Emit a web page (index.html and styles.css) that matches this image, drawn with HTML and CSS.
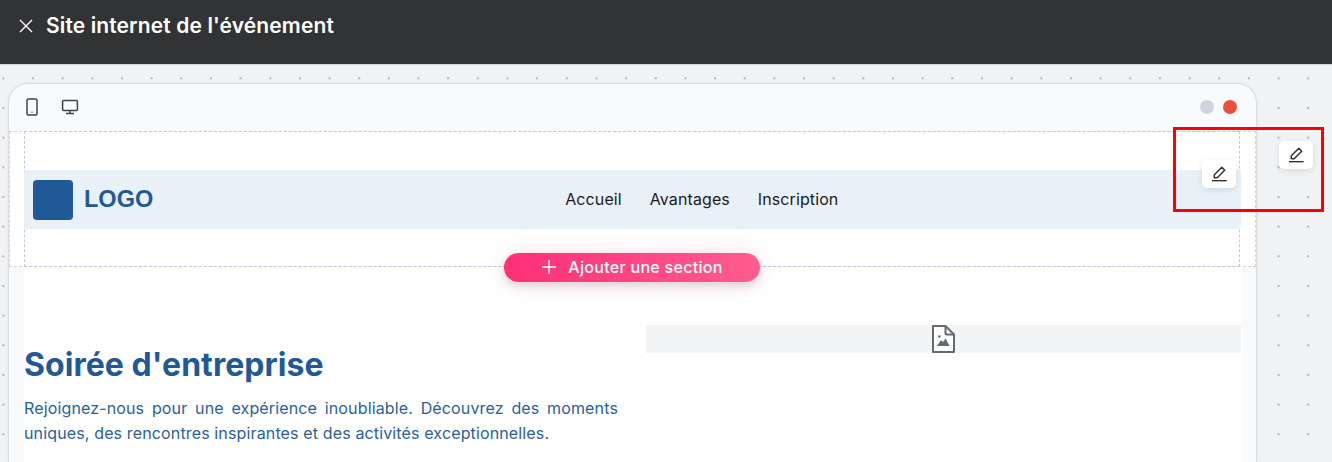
FILE: index.html
```html
<!DOCTYPE html>
<html lang="fr">
<head>
<meta charset="utf-8">
<title>Site internet de l'événement</title>
<link rel="stylesheet" href="styles.css">
</head>
<body>
<header class="topbar">
  <svg class="close" width="16" height="16" viewBox="0 0 16 16"><path d="M2 2l12 12M14 2L2 14" stroke="#fff" stroke-width="1.4" fill="none"/></svg>
  <h1 class="title">Site internet de l'événement</h1>
</header>
<main class="canvas">
  <div class="window">
    <div class="winbar">
      <svg class="dev" width="20" height="20" viewBox="0 0 20 20"><rect x="5" y="2" width="10" height="16" rx="1.5" fill="none" stroke="#3f4347" stroke-width="1.5"/><rect x="9.4" y="14.6" width="1.2" height="1.2" fill="#3f4347"/></svg>
      <svg class="dev" width="20" height="20" viewBox="0 0 20 20"><rect x="2.6" y="3.6" width="14.8" height="9.800" rx="1" fill="none" stroke="#3f4347" stroke-width="1.5"/><path d="M10 13.500v2.500M6 16.500h8" stroke="#3f4347" stroke-width="1.5" fill="none"/></svg>
      <span class="spacer"></span>
      <span class="dot grey"></span>
      <span class="dot red"></span>
    </div>
    <div class="page">
      <section class="selected">
        <div class="inner">
          <nav class="nav">
            <div class="brand"><span class="mark"></span><span class="logo">LOGO</span></div>
            <ul class="links"><li>Accueil</li><li>Avantages</li><li>Inscription</li></ul>
          </nav>
        </div>
        <button class="add"><svg width="16" height="16" viewBox="0 0 16 16"><path d="M8 1v14M1 8h14" stroke="#fff" stroke-width="1.4" fill="none"/></svg>Ajouter une section</button>
      </section>
      <div class="content">
        <section class="hero">
          <div class="copy">
            <h2>Soirée d'entreprise</h2>
            <p>Rejoignez-nous pour une expérience inoubliable. Découvrez des moments uniques, des rencontres inspirantes et des activités exceptionnelles.</p>
          </div>
          <div class="media">
            <svg width="23" height="28" viewBox="0 0 23 28"><path d="M1 1h12.500L22 9.500V27H1z" fill="#fff" stroke="#636a75" stroke-width="2" stroke-linejoin="round"/><path d="M13.500 1.500v7a1 1 0 0 0 1 1H21.500" fill="none" stroke="#636a75" stroke-width="2"/><circle cx="7.300" cy="11.500" r="1.300" fill="#636a75"/><path d="M5 21l4-6 2 2 2.500-3.500 4 7.500z" fill="#636a75"/></svg>
          </div>
        </section>
      </div>
    </div>
  </div>
  <button class="edit edit-a"><svg width="18" height="18" viewBox="0 0 18 18"><path d="M4.300 12.700V9.800L11.800 2.300l2.900 2.900-7.500 7.500z" fill="none" stroke="#333" stroke-width="1.500" stroke-linejoin="round"/><path d="M2 15.700h14.700" stroke="#333" stroke-width="1.400"/></svg></button>
  <button class="edit edit-b"><svg width="18" height="18" viewBox="0 0 18 18"><path d="M4.300 12.700V9.800L11.800 2.300l2.900 2.900-7.500 7.500z" fill="none" stroke="#333" stroke-width="1.500" stroke-linejoin="round"/><path d="M2 15.700h14.700" stroke="#333" stroke-width="1.400"/></svg></button>
  <div class="highlight"></div>
</main>
</body>
</html>
```
FILE: styles.css
```css
* { box-sizing: border-box; }
html, body { margin: 0; height: 100%; overflow: hidden; }
body { font-family: "Inter", "Noto Sans", sans-serif; display: flex; flex-direction: column; background: #f1f2f4; }
.topbar { height: 65px; flex: none; background: #323334; border-bottom: 1px solid #d8d9db; display: flex; align-items: center; padding: 0 0 12px 18px; gap: 12px; }
.title { margin: 0; color: #fff; font-size: 21px; letter-spacing: .12px; font-weight: 600; line-height: 28px; white-space: nowrap; }
.canvas { position: relative; flex: 1; min-height: 0; padding: 18px 75px 0 8px; background-color: #f1f2f4; background-image: radial-gradient(circle at center, #b2b4b8 0, #b2b4b8 .7px, transparent 1.3px); background-size: 29.67px 29.67px; background-position: -11.5px -1.5px; }
.window { height: 100%; background: #f9fafc; border: 1px solid #dcdde0; border-bottom: 0; border-radius: 20px 20px 0 0; display: flex; flex-direction: column; box-shadow: 0 0 3px rgba(0,0,0,.06); }
.winbar { height: 47px; flex: none; display: flex; align-items: center; padding: 0 19px 2px 13px; gap: 18px; }
.spacer { flex: 1; }
.dot { width: 14px; height: 14px; border-radius: 50%; margin-left: -9px; }
.dot.grey { background: #d1d5db; }
.dot.red { background: #ea4f3d; }
.page { flex: 1; min-height: 0; display: flex; flex-direction: column; }
.selected { position: relative; height: 136px; flex: none; background: #fff; border: 1px dashed #f6c4d8; }
.inner { height: 136px; margin: -1px 15px 0 14px; border: 1px dashed #bccbe4; padding: 38px 0 0; }
.nav { height: 59px; margin: 0 -2px 0 -1px; background: #e8f0f8; border-radius: 4px; padding: 0 9px; display: flex; align-items: center; }
.brand { display: flex; align-items: center; gap: 11px; }
.mark { width: 40px; height: 40px; background: #1f5a96; border-radius: 4px; }
.logo { font-family: "Liberation Sans", Arial, sans-serif; font-weight: 700; font-size: 23.5px; color: #1f5a96; }
.links { list-style: none; margin: 0 0 2px 412px; padding: 0; display: flex; gap: 28px; font-size: 16px; letter-spacing: .1px; color: #1c1c1c; }
.add { position: absolute; left: 494px; top: 121px; width: 256px; height: 29px; border: 0; padding: 0 0 2px; border-radius: 15px; background: linear-gradient(90deg, #ff2f78, #ff5d90); color: #fff; font: 500 16px "Inter", sans-serif; letter-spacing: .3px; display: flex; align-items: center; justify-content: center; gap: 11px; box-shadow: 0 0 28px rgba(255,47,120,.12), 0 4px 10px rgba(0,0,0,.14); }
.content { flex: 1; min-height: 0; margin: 0 14px 0 15px; background: #fff; padding-top: 56px; }
.hero { display: grid; grid-template-columns: 594px 595px; column-gap: 28px; align-items: start; }
.copy h2 { margin: 0; padding-top: 22px; font-size: 32px; letter-spacing: .05px; line-height: 40px; font-weight: 700; color: #1f5a96; }
.copy p { margin: 11px 0 0; font-size: 16px; letter-spacing: .14px; line-height: 25px; color: #2a6199; text-align: justify; }
.media { height: 28px; margin-top: 2px; background: #f3f4f6; display: flex; justify-content: center; }
.media svg { flex: none; }
.edit { position: absolute; width: 34px; height: 28px; border: 0; padding: 0; background: #fff; border-radius: 5px; box-shadow: 0 2px 6px rgba(0,0,0,.1); display: flex; align-items: center; justify-content: center; }
.edit-a { left: 1202px; top: 95px; }
.edit-b { left: 1279px; top: 76px; }
.highlight { position: absolute; left: 1173px; top: 62px; width: 151px; height: 85px; border: 3px solid #f00; }
```
